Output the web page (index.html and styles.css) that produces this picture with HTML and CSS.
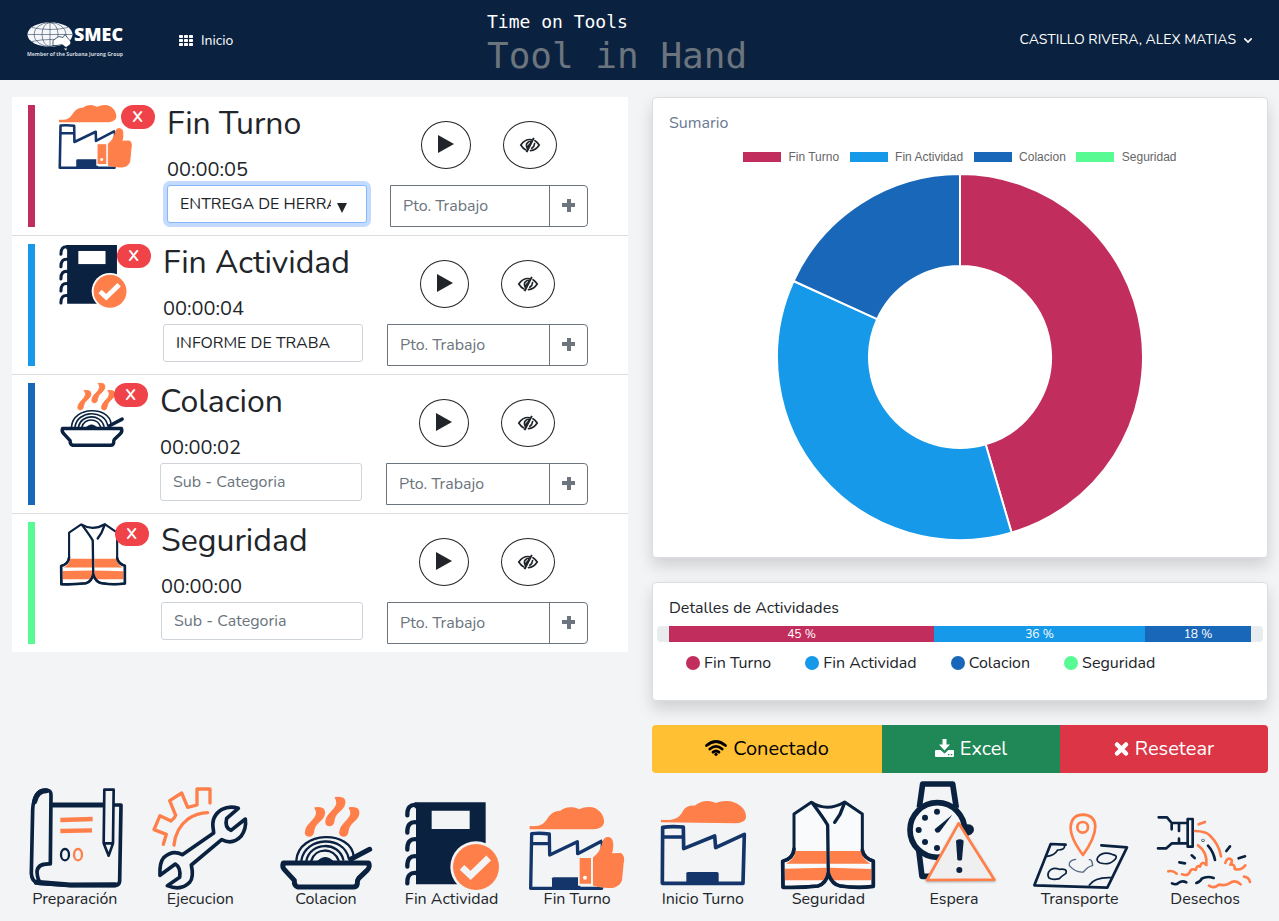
FILE: index.html
```html
<!DOCTYPE html>
<html lang="es">
<head>
<meta charset="utf-8">
<title>Time on Tools</title>
<link rel="stylesheet" href="styles.css">
</head>
<body>
<svg class="sprite" width="0" height="0" aria-hidden="true">
  <defs>
    <g id="i-prep" fill="none" stroke="#0a2240" stroke-linejoin="round" stroke-linecap="round">
      <path stroke-width="11" d="M155 90H362L358 318Q357 331 342 332L210 331 115 325Q94 320 93 295L97 105Q100 45 136 45Q153 45 152 60L150 267Q112 265 110 290Q111 315 122 325"/>
      <path stroke-width="15" d="M155 90H306M108 322L210 330 345 329M103 80Q110 47 138 47"/>
      <path stroke-width="8" fill="#f3f4f6" d="M312 44H340L338 205 325 242 310 205ZM310 205H338"/>
      <path stroke="#ff7f4a" stroke-width="13" stroke-linecap="butt" d="M180 135L277 132M180 168L275 166"/>
      <ellipse cx="194" cy="239" rx="12" ry="17" stroke-width="7"/>
      <ellipse cx="233" cy="239" rx="12" ry="17" stroke="#ff7f4a" stroke-width="7"/>
    </g>
    <g id="i-exec" fill="none" stroke-width="10" stroke-linejoin="round" stroke-linecap="round">
      <path stroke="#ff7f4a" d="M491 208L500 178 463 164 481 122 514 138Q525 130 528 121L510 77 546 54 564 97 592 90V42H631V84M523 210Q528 160 565 132Q592 114 624 113"/>
      <path stroke="#0a2240" stroke-width="11" d="M716 100Q690 91 667 103Q633 123 641 164L642 174 548 239Q518 223 492 248Q479 263 481 301L527 267Q544 277 540 307L503 332Q545 349 570 322Q583 307 575 270L666 194Q699 211 724 184Q741 161 737 132L694 166Q674 158 681 130Z"/>
    </g>
    <g id="i-bowl" fill="none" stroke="#0a2240" stroke-linejoin="round" stroke-linecap="round">
      <path stroke-width="7" d="M109 256C116 165 275 165 281 245M124 257C135 183 252 180 266 250M139 257C151 200 236 198 250 254M154 257C166 217 221 216 236 257"/>
      <path fill="#0a2240" stroke-width="3" d="M173 258Q196 236 219 258Z"/>
      <path stroke-width="15" d="M272 253L329 223"/>
      <path stroke-width="15" d="M70 264H326Q331 277 321 286L296 310Q291 316 292 326Q290 336 280 336H113Q102 332 103 316L76 287Q65 277 70 264Z"/>
      <g fill="#ff7f4a" stroke="#ff7f4a" stroke-width="4">
        <path id="steam" d="M165 99Q176 97 188 101Q196 109 192 120C188 137 163 143 161 166Q160 181 150 183Q132 184 138 164C143 146 168 134 170 116Q170 105 165 99Z"/>
        <use href="#steam" x="61" y="-31"/>
        <use href="#steam" x="103" y="0"/>
      </g>
    </g>
    <g id="i-book">
      <path fill="#0a2240" d="M463 82H676V328H467V100H463Z"/>
      <path id="ring" fill="none" stroke="#0a2240" stroke-width="13" stroke-linecap="round" d="M469 90Q440 86 441 121"/>
      <use href="#ring" y="52"/><use href="#ring" y="103"/><use href="#ring" y="154"/><use href="#ring" y="204"/>
      <path fill="currentColor" d="M514 107H628V162H514Z"/>
      <circle cx="647" cy="276" r="77" fill="currentColor"/>
      <circle cx="647" cy="276" r="69" fill="#ff7f4a"/>
      <path fill="none" stroke="currentColor" stroke-width="20" d="M605 277L631 301 685 249"/>
    </g>
    <g id="i-thumb">
      <path fill="none" stroke="#13356a" stroke-width="10" stroke-linejoin="round" d="M278 200L276 340H63L66 176Q90 173 119 177L120 240 203 200 204 236 278 197M64 206H121"/>
      <path fill="#13356a" d="M127 345V310Q127 307 133 307H212V345Z"/>
      <path fill="#ff7f4a" d="M60 153C90 155 102 150 116 126Q132 106 152 107Q167 94 190 97Q202 99 208 103Q228 94 248 97C274 104 285 127 283 145Q277 162 252 163H60Z"/>
      <path fill="#ff7f4a" stroke="currentColor" stroke-width="12" d="M211 248H246V326H211Z"/>
      <path fill="#ff7f4a" stroke="#ff7f4a" stroke-width="4" d="M212 251H242V324H212ZM252 248Q274 232 281 199Q286 187 296 188Q307 190 308 202Q311 218 304 237L333 236Q345 244 340 264L335 316Q329 332 312 336Q282 339 252 330Z"/>
      <circle cx="226" cy="308" r="6" fill="#fff"/>
    </g>
    <g id="i-factory">
      <path fill="none" stroke="#13356a" stroke-width="11" stroke-linejoin="round" d="M456 325L457 157Q480 153 519 156L520 221 613 183 616 218 702 178 698 325ZM457 186H519"/>
      <path fill="#13356a" d="M528 325V295Q529 291 534 291H620Q625 291 625 296V325Z"/>
      <path fill="#ff7f4a" d="M452 134C490 138 508 129 518 107Q530 90 553 92Q570 77 595 78Q612 81 616 84Q638 75 661 79C693 86 712 110 706 132Q699 144 675 145L452 142Z"/>
    </g>
    <g id="i-vest" fill="none" stroke="#0a2240" stroke-linejoin="round" stroke-linecap="round">
      <path fill="#fff" fill-opacity=".5" stroke-width="9" d="M140 82Q188 112 240 81L293 117V228Q300 249 326 258V334Q280 341 225 332Q202 326 190 295Q184 325 160 333Q100 337 55 337L54 259Q85 250 88 224V117Z"/>
      <path fill="#ff7f4a" stroke="none" d="M92 228H186V266H64Q91 252 92 228ZM196 228H290Q292 252 317 266H196ZM61 281L186 278V296Q183 309 176 316H61ZM196 278L320 282V316H204L196 296Z"/>
      <path stroke-width="10" d="M143 84Q181 135 189 151L191 299M240 83L226 118 210 142"/>
      <path stroke-width="11" d="M88 222Q86 251 54 259L55 337Q110 339 160 333Q184 326 191 295Q202 329 226 333Q280 341 326 334V258Q297 250 293 225"/>
    </g>
    <g id="i-watch">
      <path fill="none" stroke="#0a2240" stroke-width="17" stroke-linejoin="round" d="M463 98L473 27H563L574 99M461 224L471 304H500"/>
      <path fill="#0a2240" d="M600 148Q627 145 627 165Q625 182 600 183Z"/>
      <circle cx="517" cy="165" r="82" fill="#f6f7f9" stroke="#0a2240" stroke-width="17"/>
      <g fill="#0a2240"><circle cx="516" cy="110" r="9"/><circle cx="480" cy="128" r="9"/><circle cx="461" cy="165" r="9"/><circle cx="480" cy="201" r="9"/><circle cx="516" cy="219" r="9"/><path d="M562 119L524 171Q511 178 509 163Z"/></g>
      <path class="sign" fill="#efefef" stroke="#ff7f4a" stroke-width="8" stroke-linejoin="round" d="M581 145L688 314 486 315Z"/>
      <path fill="#0a2240" d="M573 197Q584 189 596 197L591 254Q584 259 577 254Z"/>
      <circle cx="583" cy="285" r="9" fill="#0a2240"/>
    </g>
    <g id="i-map" fill="none" stroke="#0a2240" stroke-width="8" stroke-linejoin="round" stroke-linecap="round">
      <path d="M151 209L106 207 57 331 276 338 335 217 258 211"/>
      <path stroke-width="5" d="M148 212Q148 226 127 225Q117 242 95 244M248 246Q263 228 290 238Q312 242 296 256Q280 271 255 264Q240 258 248 246ZM100 291Q111 275 132 283Q157 280 152 295Q138 304 132 311Q112 316 101 309Q95 300 100 291ZM222 330Q239 305 290 308"/>
      <path stroke-width="4" stroke="#536681" d="M181 253Q159 256 162 272Q182 294 204 291Q218 274 232 272Q230 252 222 254"/>
      <path stroke="#ff7f4a" d="M203 240Q164 188 166 154Q170 119 203 119Q238 120 240 154Q239 191 203 240Z"/>
      <circle cx="202" cy="157" r="16" stroke="#ff7f4a"/>
    </g>
    <g id="i-waste" fill="none" stroke="#0a2240" stroke-width="8" stroke-linecap="round" stroke-linejoin="round">
      <path d="M432 127H457L471 144H517M471 144V163M493 147V168M430 220H455L472 205H517M493 205V191M519 132H534V215H519Z"/>
      <path d="M494 262L511 265M531 241L540 249M580 212Q596 230 601 255M635 228L646 214M672 250L691 244M472 325Q484 331 491 324Q503 315 515 322M545 324Q557 320 561 311Q577 302 597 309"/>
      <circle cx="565" cy="196" r="1"/>
      <path stroke="#ff7f4a" d="M552 148L571 141M541 168Q574 169 585 181Q613 208 619 244M550 211Q579 231 575 270Q562 256 556 275Q546 269 543 285Q529 278 525 292Q519 304 502 298M461 289Q474 285 486 296M632 264Q637 246 649 253Q655 258 647 269Q662 267 660 282Q680 288 692 271M583 332Q598 342 612 329Q631 333 644 325Q662 312 678 328M688 305Q703 307 706 321"/>
    </g>
    <g id="i-play"><path fill="#212529" d="M0 0L16 9 0 18Z"/></g>
    <g id="i-eye" fill="none" stroke="#212529" stroke-width="1.7" stroke-linecap="round">
      <path d="M11.500 2.700Q10.900 2.500 10 2.500Q4.500 2.500 .8 8Q3 11.500 5.500 12.800M15 3.700Q17.500 5.200 19.200 8Q16 13.100 10.500 13.600M14.600 6.500Q14.400 9.500 11.800 11.200"/>
      <path fill="#212529" stroke="none" d="M13 .4L14.700 1.200 7.500 15.400 5.600 14.800 6.700 12.300Q4.800 9.500 5.800 6.500 7.500 3.400 11.500 3.400Z"/>
      <path stroke="#fff" stroke-width=".9" d="M7.600 8Q7.800 6 9.600 5.600"/>
    </g>
  </defs>
</svg>

<header class="navbar">
  <svg class="logo" viewBox="0 0 100 40" width="100" height="40">
    <ellipse cx="25" cy="14.500" rx="22.500" ry="12.300" fill="#f5f7fa"/>
    <g fill="none" stroke="#0a2240" stroke-width=".5"><ellipse cx="25" cy="14.500" rx="8" ry="12"/><ellipse cx="25" cy="14.500" rx="16" ry="12"/><path d="M25 2V26M3 14.500H47M7 7.500Q25 11.500 43 7.500M7 21.500Q25 17.500 43 21.500"/></g>
    <path fill="#fff" stroke="#0a2240" stroke-width=".7" d="M28 20.500Q32 17.500 34 16.500L38 17.500 40 14.500 43 18.500Q48 22.500 44 25.500L41 27.500 37 24.500 32 25.500 28 25.500Z"/>
    <path fill="#fff" d="M39 28.500H42L41 30.500Z"/>
    <text class="logo-name" x="49" y="20.500" textLength="49" lengthAdjust="spacingAndGlyphs">SMEC</text>
    <text class="logo-sub" x="2" y="35.700" textLength="96" lengthAdjust="spacingAndGlyphs">Member of the Surbana Jurong Group</text>
  </svg>
  <a class="home"><svg width="14" height="11" viewBox="0 0 14 11" fill="#fff"><g id="dots"><rect width="4" height="3" rx=".8"/><rect x="5" width="4" height="3" rx=".8"/><rect x="10" width="4" height="3" rx=".8"/></g><use href="#dots" y="4"/><use href="#dots" y="8"/></svg><span>Inicio</span></a>
  <div class="brand"><div class="brand-top">Time on Tools</div><div class="brand-sub">Tool in Hand</div></div>
  <div class="user"><span>CASTILLO RIVERA, ALEX MATIAS</span><svg width="8" height="5" viewBox="0 0 8 5"><path d="M.8.8L4 4 7.200.8" fill="none" stroke="#fff" stroke-width="1.700" stroke-linecap="round"/></svg></div>
</header>

<main class="content">
  <section class="tasks">
    <article class="task turno">
      <div class="bar"></div>
      <div class="media"><svg width="73" height="64" viewBox="60 96 284 249"><use href="#i-thumb"/></svg><span class="close">X</span></div>
      <div class="info"><h2>Fin Turno</h2><div class="time">00:00:05</div><div class="select focus"><span class="value">ENTREGA DE HERRA</span><span class="caret"></span></div></div>
      <div class="controls"><div class="rounds"><button class="round play"><svg width="16" height="18"><use href="#i-play"/></svg></button><button class="round eye"><svg width="20" height="16"><use href="#i-eye"/></svg></button></div><div class="group"><span>Pto. Trabajo</span><b class="plus"></b></div></div>
    </article>
    <article class="task actividad">
      <div class="bar"></div>
      <div class="media"><svg class="low" width="68" height="62" viewBox="434 82 283 260"><use href="#i-book"/></svg><span class="close">X</span></div>
      <div class="info"><h2>Fin Actividad</h2><div class="time">00:00:04</div><div class="select"><span class="value">INFORME DE TRABA</span></div></div>
      <div class="controls"><div class="rounds"><button class="round play"><svg width="16" height="18"><use href="#i-play"/></svg></button><button class="round eye"><svg width="20" height="16"><use href="#i-eye"/></svg></button></div><div class="group"><span>Pto. Trabajo</span><b class="plus"></b></div></div>
    </article>
    <article class="task colacion">
      <div class="bar"></div>
      <div class="media"><svg width="66" height="64" viewBox="56 66 284 278"><use href="#i-bowl"/></svg><span class="close">X</span></div>
      <div class="info"><h2>Colacion</h2><div class="time">00:00:02</div><div class="select empty"><span class="value">Sub - Categoria</span></div></div>
      <div class="controls"><div class="rounds"><button class="round play"><svg width="16" height="18"><use href="#i-play"/></svg></button><button class="round eye"><svg width="20" height="16"><use href="#i-eye"/></svg></button></div><div class="group"><span>Pto. Trabajo</span><b class="plus"></b></div></div>
    </article>
    <article class="task seguridad">
      <div class="bar"></div>
      <div class="media"><svg width="68" height="64" viewBox="45 72 290 272"><use href="#i-vest"/></svg><span class="close">X</span></div>
      <div class="info"><h2>Seguridad</h2><div class="time">00:00:00</div><div class="select empty"><span class="value">Sub - Categoria</span></div></div>
      <div class="controls"><div class="rounds"><button class="round play"><svg width="16" height="18"><use href="#i-play"/></svg></button><button class="round eye"><svg width="20" height="16"><use href="#i-eye"/></svg></button></div><div class="group"><span>Pto. Trabajo</span><b class="plus"></b></div></div>
    </article>
  </section>

  <section class="side">
    <div class="card summary">
      <div class="card-title muted">Sumario</div>
      <div class="legend"><span class="turno">Fin Turno</span><span class="actividad">Fin Actividad</span><span class="colacion">Colacion</span><span class="seguridad">Seguridad</span></div>
      <svg class="donut" width="368" height="368" viewBox="-184 -184 368 368">
        <g stroke="#fff" stroke-width="2" stroke-linejoin="bevel">
          <path fill="#c12e5d" d="M0-183A183 183 0 0 1 51.560 175.590L25.640 87.320A91 91 0 0 0 0-91Z"/>
          <path fill="#1599e8" d="M51.560 175.590A183 183 0 0 1-166.460-76.020L-82.780-37.800A91 91 0 0 0 25.640 87.320Z"/>
          <path fill="#1967b8" d="M-166.460-76.020A183 183 0 0 1 0-183V-91A91 91 0 0 0-82.780-37.800Z"/>
        </g>
      </svg>
    </div>
    <div class="card details">
      <div class="card-title">Detalles de Actividades</div>
      <div class="progress"><div class="turno" style="width:265px">45 %</div><div class="actividad" style="width:211px">36 %</div><div class="colacion" style="width:106px">18 %</div></div>
      <div class="dots"><span class="turno">Fin Turno</span><span class="actividad">Fin Actividad</span><span class="colacion">Colacion</span><span class="seguridad">Seguridad</span></div>
    </div>
    <div class="actions">
      <button class="conn"><svg width="22" height="16" viewBox="0 0 22 16"><g fill="none" stroke="#000" stroke-width="2.800" stroke-linecap="round"><path d="M1.500 5.500Q11-2.500 20.500 5.500M4.800 9Q11 3.800 17.200 9M8 12.200Q11 9.800 14 12.200"/></g><circle cx="11" cy="14.300" r="1.600"/></svg>Conectado</button>
      <button class="excel"><svg width="19" height="18" viewBox="0 0 19 18" fill="#fff"><path d="M7.500 0H11.500V5.500H15L9.500 11.500 4 5.500H7.500ZM1 11H5.500L9.500 14.500 13.500 11H18Q19 11 19 12V17Q19 18 18 18H1Q0 18 0 17V12Q0 11 1 11Z"/><path fill="#208757" d="M13 15H14.500V16.200H13ZM15.800 15H17.300V16.200H15.800Z"/></svg>Excel</button>
      <button class="reset"><svg width="15" height="14" viewBox="0 0 15 14"><path d="M3 2.500L12 11.500M12 2.500L3 11.500" stroke="#fff" stroke-width="4.500" stroke-linecap="round"/></svg>Resetear</button>
    </div>
  </section>
</main>

<nav class="menu">
  <a><svg viewBox="74 18 300 318"><use href="#i-prep"/></svg>Preparación</a>
  <a><svg viewBox="451 18 300 318"><use href="#i-exec"/></svg>Ejecucion</a>
  <a><svg viewBox="48 18 300 318"><use href="#i-bowl"/></svg>Colacion</a>
  <a><svg viewBox="425 18 300 318"><use href="#i-book"/></svg>Fin Actividad</a>
  <a><svg viewBox="52 18 300 318"><use href="#i-thumb"/></svg>Fin Turno</a>
  <a><svg viewBox="428 18 300 318"><use href="#i-factory"/></svg>Inicio Turno</a>
  <a><svg viewBox="40 18 300 318"><use href="#i-vest"/></svg>Seguridad</a>
  <a><svg viewBox="417 18 300 318"><use href="#i-watch"/></svg>Espera</a>
  <a><svg viewBox="44 18 300 318"><use href="#i-map"/></svg>Transporte</a>
  <a><svg viewBox="421 18 300 318"><use href="#i-waste"/></svg>Desechos</a>
</nav>
</body>
</html>
```
FILE: styles.css
```css
* { box-sizing: border-box; }
body {
  margin: 0;
  height: 921px;
  overflow: hidden;
  background: #f3f4f6;
  color: #212529;
  font: 16px/24px Nunito, Lato, sans-serif;
}
button { font: inherit; padding: 0; border: 0; }
svg { display: block; flex: none; overflow: visible; }
.sprite { position: absolute; }

.turno { --c: #c12e5d; }
.actividad { --c: #1599e8; }
.colacion { --c: #1967b8; }
.seguridad { --c: #58fa94; }

.navbar {
  display: flex;
  height: 80px;
  padding: 0 27px 0 25px;
  background: #0a2240;
  color: #fff;
  font-size: 14px;
}
.logo { margin-top: 20px; }
.logo-name { font: 800 18px "Open Sans", sans-serif; fill: #fff; }
.logo-sub { font: 700 5.5px "Open Sans", sans-serif; fill: #cfd6df; }
.home { display: flex; align-items: center; gap: 8px; width: 308px; margin-left: 54px; padding-top: 1px; }
.brand { font-family: "DejaVu Sans Mono", monospace; padding-top: 10px; white-space: nowrap; }
.brand-top { font-size: 18px; line-height: 24px; }
.brand-sub { font-size: 36px; line-height: 43px; color: #6c757d; }
.user { display: flex; align-items: center; gap: 8px; margin-left: auto; }

.content { display: grid; grid-template-columns: 616px 616px; gap: 24px; padding: 17px 12px 0; height: 701px; }
.tasks { align-self: start; background: #fff; }
.task { display: flex; height: 139px; padding: 8px 16px; border-bottom: 1px solid #dcdddf; }
.task:last-child { border-bottom: 0; height: 138px; }
.bar { width: 7px; height: 122px; background: var(--c); }
.media { position: relative; width: var(--mw); margin-left: 24px; color: #fff; }
.media .low { margin-top: 1px; }
.close {
  position: absolute; top: 0; right: 12px;
  width: 34.5px; height: 24px; border-radius: 12px;
  background: #ef4349; color: #fff; text-align: center; font-weight: 700;
}
.task.turno { --mw: 108px; --gw: 198px; --iw: 200px; --pw: 50px; }
.task.actividad { --mw: 104px; --gw: 201px; --iw: 200px; --pw: 49px; }
.task.colacion { --mw: 101px; --gw: 202px; --iw: 202px; --pw: 50px; }
.task.seguridad { --mw: 102px; --gw: 201px; --iw: 202px; --pw: 50px; }
.info { width: var(--iw); }
.info h2 { margin: 0 0 8px; font-size: 32px; font-weight: 400; line-height: 38px; white-space: nowrap; }
.time { font-size: 20px; line-height: 32px; padding-top: 3px; }
.select {
  display: flex; justify-content: space-between; align-items: center;
  height: 38px; margin-top: -1px; padding: 0 19px 0 12px;
  border: 1px solid #ced4da; border-radius: 3px; background: #fff;
}
.select .value { width: 156px; overflow: hidden; white-space: nowrap; }
.focus { border-color: #86b7fe; box-shadow: 0 0 0 4px #c2dbfe; }
.focus .value { width: 151px; }
.caret { border: 5.5px solid transparent; border-top: 10px solid #212529; border-bottom: 0; margin-top: 8px; }
.empty, .group { color: #6c757d; }
.controls { width: var(--gw); margin: 16px 24px 0 auto; }
.rounds { display: flex; justify-content: center; gap: 32px; margin-bottom: 16px; }
.seguridad .rounds { padding-right: 1px; }
.round { display: flex; align-items: center; justify-content: center; height: 48px; border: 1px solid #212529; border-radius: 50%; background: #fff; }
.play { width: var(--pw); padding-bottom: 3px; }
.eye { width: 54px; }
.group { display: flex; height: 42px; border: 1px solid #6c757d; border-radius: 0 4px 4px 0; line-height: 40px; }
.group span { flex: 1; padding-left: 12px; }
.plus { display: grid; place-items: center; width: 38px; border-left: 1px solid #6c757d; }
.plus::before {
  content: ""; width: 13px; height: 13px; margin-bottom: 2px;
  background: linear-gradient(#6c757d, #6c757d) center / 13px 4px no-repeat, linear-gradient(#6c757d, #6c757d) center / 4px 13px no-repeat;
}

.card { background: #fff; border: 1px solid #dcdde0; border-radius: 4px; box-shadow: 0 8px 16px rgba(0, 0, 0, .15); }
.card-title { padding-left: 16px; }
.muted { color: #6b7a93; }
.summary { height: 461px; padding-top: 13px; }
.legend { display: flex; gap: 10.6px; padding: 15px 0 0 90px; font: 12px/14px "Liberation Sans", sans-serif; color: #666; white-space: nowrap; }
.legend span { display: flex; align-items: center; gap: 7.400px; }
.legend span::before { content: ""; width: 38px; height: 10px; background: var(--c); }
.donut { margin: 9px auto 0 123px; }
.details { height: 119px; margin-top: 24px; padding-top: 13px; }
.progress { display: flex; height: 16px; margin: 6px 4px 0; padding-left: 12px; border-radius: 4px; background: #e9ecef; font-size: 12px; line-height: 16px; color: #fff; text-align: center; }
.progress div { background: var(--c); }
.dots { display: flex; gap: 34px; padding: 8px 0 0 33px; white-space: nowrap; }
.dots span { display: flex; align-items: center; gap: 4px; }
.dots span:first-child { padding-top: 1px; }
.dots span::before { content: ""; width: 14px; height: 14px; border-radius: 50%; background: var(--c); }
.actions { display: grid; grid-template-columns: 230px 178px 208px; height: 48px; margin-top: 24px; border-radius: 4px; overflow: hidden; font-size: 20px; }
.actions button { display: flex; align-items: center; justify-content: center; gap: 6px; color: #fff; }
.actions svg { margin-bottom: 3px; }
.actions .reset svg { margin-bottom: 0; }
.actions .conn { background: #ffc033; color: #000; }
.actions .excel { background: #208757; }
.actions .reset { background: #dc3546; }

.menu { display: grid; grid-template-columns: repeat(10, 1fr); padding: 0 11px 0 12px; }
.menu a { display: flex; flex-direction: column; align-items: center; white-space: nowrap; }
.menu svg { width: 100px; height: 106px; color: #f3f4f6; }
.sign { filter: drop-shadow(0 3px 3px rgba(0, 0, 0, .3)); }
```
